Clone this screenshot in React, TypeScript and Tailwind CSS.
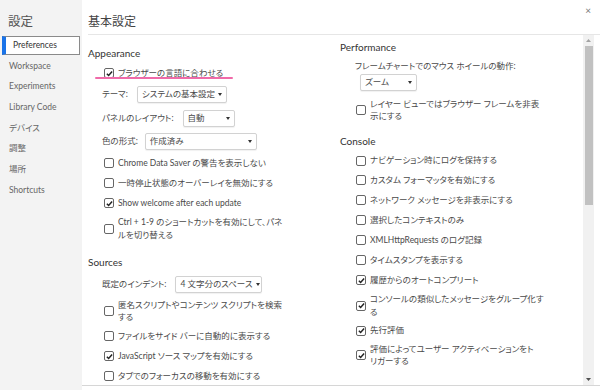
import React from 'react';

const FONT = "font-['Lato','Noto_Sans_CJK_JP',sans-serif] [font-feature-settings:'palt']";

const navItems = [
  'Preferences',
  'Workspace',
  'Experiments',
  'Library Code',
  'デバイス',
  '調整',
  '場所',
  'Shortcuts',
];

const Checkbox: React.FC<{ checked?: boolean }> = ({ checked }) => (
  <span className="flex h-[10px] w-[10px] shrink-0 items-center justify-center rounded-[2px] border border-[#666] bg-white">
    {checked && (
      <svg width="7" height="7" viewBox="0 0 8 8">
        <path d="M1 4.2 L3 6.2 L7 1.6" fill="none" stroke="#222" strokeWidth="1.7" />
      </svg>
    )}
  </span>
);

const CheckRow: React.FC<{
  checked?: boolean;
  lines?: string[];
  label?: string;
  h?: string;
  children?: React.ReactNode;
}> = ({ checked, lines, label, h = 'h-[20px]', children }) => (
  <div className={`relative flex items-center gap-[4px] whitespace-nowrap pl-[16px] ${h}`}>
    <Checkbox checked={checked} />
    {lines ? (
      <span className="leading-[12.5px]">
        {lines.map((l) => (
          <span key={l} className="block">
            {l}
          </span>
        ))}
      </span>
    ) : (
      <span>{label}</span>
    )}
    {children}
  </div>
);

const Select: React.FC<{ value: string; w: string }> = ({ value, w }) => (
  <span
    className={`flex h-[17px] items-center justify-between gap-[3px] overflow-hidden whitespace-nowrap rounded-[2px] border border-[#d2d2d2] bg-white pl-[4px] pr-[4px] shadow-[0_1px_1px_rgba(0,0,0,0.06)] ${w}`}
  >
    <span>{value}</span>
    <svg width="4" height="3" viewBox="0 0 4 3" className="shrink-0">
      <path d="M0 0 H4 L2 3 Z" fill="#333" />
    </svg>
  </span>
);

const SelectRow: React.FC<{ label: string; value: string; w: string; h?: string; gap?: string }> = ({
  label,
  value,
  w,
  h = 'h-[24px]',
  gap = 'gap-[9px]',
}) => (
  <div className={`flex items-center whitespace-nowrap pl-[14px] ${h} ${gap}`}>
    <span>{label}</span>
    <Select value={value} w={w} />
  </div>
);

const SectionTitle: React.FC<{ title: string; cls?: string }> = ({ title, cls = '' }) => (
  <div className={`flex h-[20px] items-center text-[10px] text-[#333] ${cls}`}>{title}</div>
);

export default function App() {
  return (
    <div className={`flex h-[390px] w-[600px] overflow-hidden bg-white text-[8.5px] text-[#4a4a4a] ${FONT}`}>
      {/* sidebar */}
      <aside className="flex w-[82px] shrink-0 flex-col bg-[#f3f3f3]">
        <div className="flex h-[35px] items-center pl-[8px] pt-[10px] text-[12.5px] text-[#555]">設定</div>
        <nav className="flex flex-col">
          {navItems.map((item, i) =>
            i === 0 ? (
              <div key={item} className="flex h-[20.7px] items-center">
                <div className="ml-[2px] flex h-[19px] w-[78px] items-center border border-l-[4px] border-[#8a8a8a] border-l-[#1a73e8] bg-white pl-[7px] text-[#333]">
                  {item}
                </div>
              </div>
            ) : (
              <div key={item} className="flex h-[20.7px] items-center pl-[9px] text-[#666]">
                {item}
              </div>
            )
          )}
        </nav>
      </aside>

      {/* main */}
      <main className="relative flex min-w-0 flex-1 flex-col">
        <div className="ml-[6px] flex h-[35px] shrink-0 items-center border-b border-[#e6e6e6] pt-[10px] text-[12px] text-[#444]">
          基本設定
        </div>
        <span className="absolute right-[9px] top-[3px] text-[10px] text-[#777]">×</span>

        <div className="flex h-[351px] border-b border-[#d6d6d6]">
          <div className="flex min-w-0 flex-1">
            {/* left column */}
            <div className="w-[258px] shrink-0 pl-[6px] pt-[8px]">
              <SectionTitle title="Appearance" />
              <CheckRow checked label="ブラウザーの言語に合わせる">
                <span className="absolute left-[7px] top-[14px] h-[2px] w-[138px] rounded-full bg-[#f06aa9]" />
              </CheckRow>
              <SelectRow label="テーマ:" value="システムの基本設定" w="w-[90px]" h="h-[23px]" />
              <SelectRow label="パネルのレイアウト:" value="自動" w="w-[52px]" />
              <SelectRow label="色の形式:" value="作成済み" w="w-[112px]" h="h-[23px]" gap="gap-[7px]" />
              <CheckRow label="Chrome Data Saver の警告を表示しない" />
              <CheckRow label="一時停止状態のオーバーレイを無効にする" />
              <CheckRow checked label="Show welcome after each update" />
              <CheckRow
                h="h-[31px]"
                lines={['Ctrl + 1-9 のショートカットを有効にして、パネ', 'ルを切り替える']}
              />
              <SectionTitle title="Sources" cls="mt-[8px]" />
              <SelectRow label="既定のインデント:" value="4 文字分のスペース" w="w-[87px]" />
              <CheckRow
                h="h-[30px]"
                lines={['匿名スクリプトやコンテンツ スクリプトを検索', 'する']}
              />
              <CheckRow label="ファイルをサイド バーに自動的に表示する" />
              <CheckRow checked label="JavaScript ソース マップを有効にする" />
              <CheckRow label="タブでのフォーカスの移動を有効にする" />
            </div>

            {/* right column */}
            <div className="min-w-0 flex-1 pt-[2px]">
              <SectionTitle title="Performance" />
              <div className="mt-[3px] whitespace-nowrap pl-[15px] leading-[13px]">
                フレームチャートでのマウス ホイールの動作:
              </div>
              <div className="mt-[1px] pl-[20px]">
                <Select value="ズーム" w="w-[57px]" />
              </div>
              <CheckRow h="h-[38px]" lines={['レイヤー ビューではブラウザー フレームを非表', '示にする']} />
              <SectionTitle title="Console" cls="mt-[2px]" />
              <CheckRow h="h-[19px]" label="ナビゲーション時にログを保持する" />
              <CheckRow label="カスタム フォーマッタを有効にする" />
              <CheckRow label="ネットワーク メッセージを非表示にする" />
              <CheckRow label="選択したコンテキストのみ" />
              <CheckRow label="XMLHttpRequests のログ記録" />
              <CheckRow label="タイムスタンプを表示する" />
              <CheckRow checked label="履歴からのオートコンプリート" />
              <CheckRow checked h="h-[31px]" lines={['コンソールの類似したメッセージをグループ化す', 'る']} />
              <CheckRow checked h="h-[19px]" label="先行評価" />
              <CheckRow checked h="h-[30px]" lines={['評価によってユーザー アクティベーションをト', 'リガーする']} />
            </div>
          </div>

          {/* scrollbar */}
          <div className="mr-[6px] flex w-[11px] shrink-0 flex-col items-center bg-[#f1f1f1]">
            <div className="flex h-[11px] items-center justify-center">
              <svg width="5" height="3" viewBox="0 0 5 3">
                <path d="M0 3 H5 L2.5 0 Z" fill="#a3a3a3" />
              </svg>
            </div>
            <div className="h-[159px] w-[8px] bg-[#c1c1c1]" />
            <div className="flex-1" />
            <div className="flex h-[11px] items-center justify-center">
              <svg width="5" height="3" viewBox="0 0 5 3">
                <path d="M0 0 H5 L2.5 3 Z" fill="#505050" />
              </svg>
            </div>
          </div>
        </div>
      </main>
    </div>
  );
}
